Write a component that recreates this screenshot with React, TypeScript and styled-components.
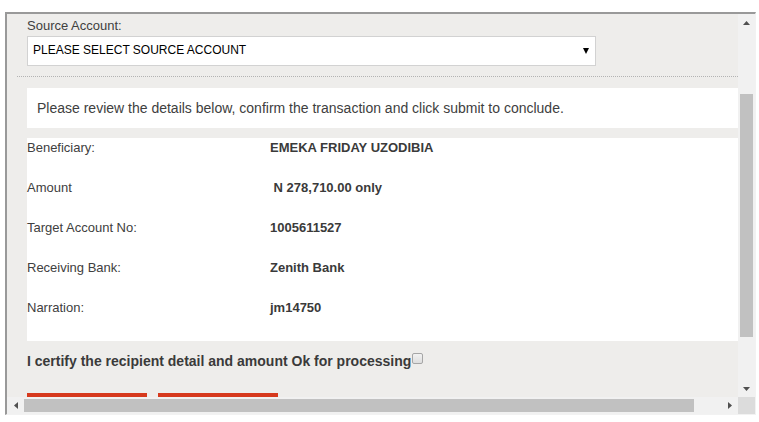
import styled, { createGlobalStyle } from 'styled-components';

const GlobalStyle = createGlobalStyle`
  html, body {
    margin: 0;
    padding: 0;
    background: #ffffff;
    font-family: 'Liberation Sans', Arial, sans-serif;
  }
`;

interface DetailRow {
  label: string;
  value: string;
}

const details: Array<DetailRow> = [
  { label: 'Beneficiary:', value: 'EMEKA FRIDAY UZODIBIA' },
  { label: 'Amount', value: '\u00a0N 278,710.00 only' },
  { label: 'Target Account No:', value: '1005611527' },
  { label: 'Receiving Bank:', value: 'Zenith Bank' },
  { label: 'Narration:', value: 'jm14750' },
];

const Arrow = ({ dir }: { dir: 'up' | 'down' | 'left' | 'right' }) => {
  const points = {
    up: '0,4 3.5,0 7,4',
    down: '0,0 7,0 3.5,4',
    left: '4,0 4,7 0,3.5',
    right: '0,0 4,3.5 0,7',
  }[dir];
  const vertical = dir === 'up' || dir === 'down';
  return (
    <svg
      width={vertical ? 7 : 4}
      height={vertical ? 4 : 7}
      viewBox={vertical ? '0 0 7 4' : '0 0 4 7'}
    >
      <polygon points={points} fill="#505050" />
    </svg>
  );
};

export default function App() {
  return (
    <>
      <GlobalStyle />
      <StyledFrame>
        <StyledContent>
          <StyledFieldLabel>Source Account:</StyledFieldLabel>
          <StyledSelect>
            <StyledSelectText>PLEASE SELECT SOURCE ACCOUNT</StyledSelectText>
            <svg width="6" height="6" viewBox="0 0 6 6">
              <polygon points="0,0 6,0 3,6" fill="#000" />
            </svg>
          </StyledSelect>
          <StyledDivider />
          <StyledNotice>
            Please review the details below, confirm the transaction and click
            submit to conclude.
          </StyledNotice>
          <StyledDetails>
            {details.map((row) => (
              <StyledRow key={row.label}>
                <StyledRowLabel>{row.label}</StyledRowLabel>
                <StyledRowValue>{row.value}</StyledRowValue>
              </StyledRow>
            ))}
          </StyledDetails>
          <StyledCertify>
            I certify the recipient detail and amount Ok for processing
            <StyledCheckbox type="checkbox" />
          </StyledCertify>
          <StyledButtons>
            <StyledButton aria-label="Submit" />
            <StyledButton aria-label="Cancel" />
          </StyledButtons>
        </StyledContent>

        <StyledVScroll>
          <StyledScrollButton>
            <Arrow dir="up" />
          </StyledScrollButton>
          <StyledVTrack>
            <StyledVThumb $offset={63} $size={243} />
          </StyledVTrack>
          <StyledScrollButton>
            <Arrow dir="down" />
          </StyledScrollButton>
        </StyledVScroll>

        <StyledHScroll>
          <StyledScrollButton>
            <Arrow dir="left" />
          </StyledScrollButton>
          <StyledHTrack>
            <StyledHThumb $size={670} />
          </StyledHTrack>
          <StyledScrollButton>
            <Arrow dir="right" />
          </StyledScrollButton>
        </StyledHScroll>

        <StyledCorner />
      </StyledFrame>
    </>
  );
}

const StyledFrame = styled.div`
  box-sizing: border-box;
  margin: 12px 0 0 5px;
  width: 751px;
  height: 403px;
  border-top: 2px solid #999999;
  border-left: 2px solid #999999;
  border-right: 1px solid #f2f2f2;
  border-bottom: 1px solid #f2f2f2;
  display: grid;
  grid-template-columns: 731px 17px;
  grid-template-rows: 383px 17px;
`;

const StyledContent = styled.div`
  overflow: hidden;
  background: #eeedeb;
  padding: 4px 0 0 20px;
  color: #333333;
`;

const StyledFieldLabel = styled.div`
  font-size: 13px;
  line-height: 15px;
  color: #404040;
`;

const StyledSelect = styled.div`
  box-sizing: border-box;
  margin-top: 3px;
  width: 569px;
  height: 30px;
  background: #ffffff;
  border: 1px solid #d2d2d2;
  display: flex;
  align-items: center;
  justify-content: space-between;
  padding: 0 6px 0 5px;
`;

const StyledSelectText = styled.span`
  align-self: flex-start;
  padding-top: 6px;
  font-size: 12px;
  line-height: 14px;
  color: #000000;
`;

const StyledDivider = styled.div`
  margin: 10px 0 0 -10px;
  border-top: 1px dotted #b3b3b3;
`;

const StyledNotice = styled.div`
  margin-top: 11px;
  background: #ffffff;
  padding: 12px 10px;
  font-size: 14px;
  line-height: 16px;
  color: #404040;
`;

const StyledDetails = styled.div`
  margin-top: 10px;
  background: #ffffff;
  padding: 2px 0 1px;
`;

const StyledRow = styled.div`
  display: grid;
  grid-template-columns: 243px 1fr;
  height: 40px;
  font-size: 13px;
  line-height: 15px;
`;

const StyledRowLabel = styled.span`
  color: #404040;
`;

const StyledRowValue = styled.span`
  font-weight: bold;
  color: #3a3a3a;
`;

const StyledCertify = styled.label`
  display: flex;
  align-items: flex-start;
  margin-top: 12px;
  font-size: 14px;
  line-height: 16px;
  font-weight: bold;
  color: #3a3a3a;
`;

const StyledCheckbox = styled.input`
  appearance: none;
  box-sizing: border-box;
  margin: 0 0 0 1px;
  width: 11px;
  height: 11px;
  border: 1px solid #a6a6a6;
  border-radius: 2px;
  background: linear-gradient(#f2f2f2, #dedede);
`;

const StyledButtons = styled.div`
  display: flex;
  gap: 11px;
  margin-top: 24px;
`;

const StyledButton = styled.div`
  width: 120px;
  height: 34px;
  background: #d6391d;
`;

const StyledVScroll = styled.div`
  background: #f1f1f1;
  display: flex;
  flex-direction: column;
`;

const StyledHScroll = styled.div`
  background: #f1f1f1;
  display: flex;
`;

const StyledScrollButton = styled.div`
  flex: 0 0 17px;
  height: 17px;
  display: flex;
  align-items: center;
  justify-content: center;
`;

const StyledVTrack = styled.div`
  flex: 1;
  padding: 0 2px;
`;

const StyledVThumb = styled.div<{ $offset: number; $size: number }>`
  margin-top: ${({ $offset }) => $offset}px;
  height: ${({ $size }) => $size}px;
  background: #c1c1c1;
`;

const StyledHTrack = styled.div`
  flex: 1;
  padding: 2px 0;
`;

const StyledHThumb = styled.div<{ $size: number }>`
  width: ${({ $size }) => $size}px;
  height: 13px;
  background: #c1c1c1;
`;

const StyledCorner = styled.div`
  background: #dcdcdc;
`;
